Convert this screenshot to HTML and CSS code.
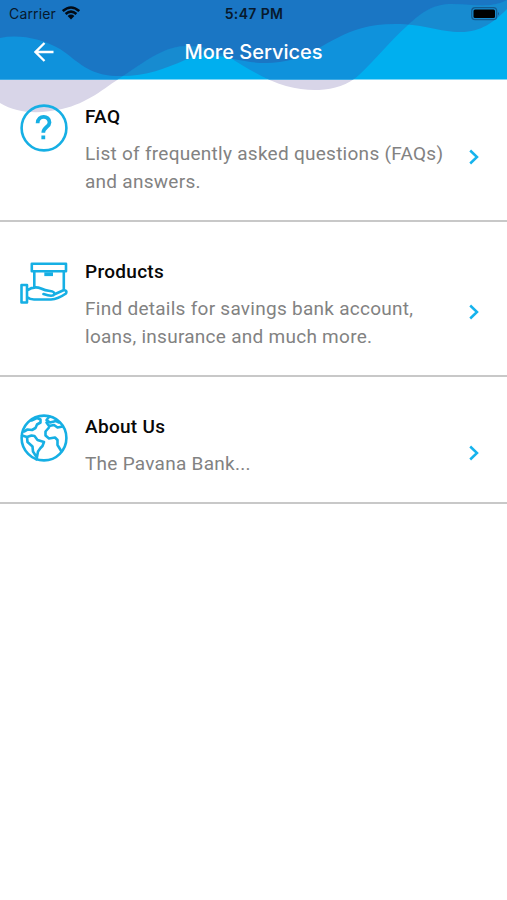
FILE: index.html
```html
<!DOCTYPE html>
<html lang="en">
<head>
<meta charset="utf-8">
<title>More Services</title>
<link rel="stylesheet" href="styles.css">
</head>
<body>
<svg class="waves" viewBox="0 0 507 120" aria-hidden="true">
  <defs>
    <clipPath id="bar"><rect width="507" height="79.5"/></clipPath>
    <path id="a" d="M0 0V103C18 114 40 114 62 109C88 103 103 89 123 76C150 58 166 46 187 46C218 46 232 60 254 72C278 86 301 91 319 90C334 89 348 85 359 75C376 59 390 41 407 26C424 10 435 4 452 4C474 4 490 9 507 0Z"/>
    <path id="b" d="M0 0V38C20 34 42 39 60 49C78 61 88 75 116 76C145 77 164 69 185 60C206 50 226 58 245 61C260 64 277 64 294 59C329 48 343 24 395 24C424 24 439 32 461 32C481 32 494 22 507 9V0Z"/>
    <clipPath id="inside-b"><use href="#b"/></clipPath>
  </defs>
  <use href="#a" class="haze"/>
  <g clip-path="url(#bar)">
    <rect class="bar-fill" width="507" height="80"/>
    <use href="#b" class="wave-b"/>
    <use href="#a" class="wave-a"/>
    <g clip-path="url(#inside-b)"><use href="#a" class="overlap"/></g>
  </g>
</svg>
<header class="header">
  <div class="status">
    <div class="carrier"><span>Carrier</span>
      <svg class="wifi" viewBox="0 0 18 14"><path d="M.8 5.1Q9-2.1 17.2 5.1M3.6 8Q9 3.4 14.4 8"/><path class="solid" d="M5.6 9.9Q9 7.2 12.4 9.9L9 13.4Z"/></svg>
    </div>
    <span class="time">5:47 PM</span>
    <svg class="battery" viewBox="0 0 29 14"><rect class="case" x=".7" y=".7" width="25" height="12" rx="3.5"/><rect x="2.5" y="2.5" width="21.5" height="8.5" rx="1.5"/><path class="tip" d="M27 5Q29 6.7 27 8.5Z"/></svg>
  </div>
  <div class="title-bar">
    <svg class="back" viewBox="0 0 20 20"><path d="M19.5 10H1.5M10.5 1L1.5 10L10.5 19"/></svg>
    <h1>More Services</h1>
  </div>
</header>
<main>
  <section class="row">
    <svg class="icon" viewBox="0 0 48 48"><circle cx="24" cy="24" r="22.4"/><path class="bold" d="M17.6 19.2C17.8 10.8 29.5 11 29.5 18.4C29.5 23 23.3 23.2 23.3 28.7M23.3 31.5V35.2"/></svg>
    <div class="copy"><h2>FAQ</h2><p>List of frequently asked questions (FAQs) and answers.</p></div>
    <svg class="chevron" viewBox="0 0 10 16"><path d="M1.2 1.5L8 8L1.2 14.5"/></svg>
  </section>
  <section class="row">
    <svg class="icon" viewBox="0 0 48 48"><path d="M11.8 4.8H46V12.2H11.8ZM14.3 12.2V28.5M43.8 12.2V31M1.5 26H7V43.5H1.5ZM7 31.5Q14 26.5 21 29.5Q25 31.7 30 32Q34.5 32.5 34.5 35Q33 38.5 23.5 35M34 35.5L43.5 31.3Q47.5 31 46 34.5Q38 40 31 40.5H14Q10 40.5 7 38"/><path class="bold" d="M24.3 15.2H33"/></svg>
    <div class="copy"><h2>Products</h2><p>Find details for savings bank account, loans, insurance and much more.</p></div>
    <svg class="chevron" viewBox="0 0 10 16"><path d="M1.2 1.5L8 8L1.2 14.5"/></svg>
  </section>
  <section class="row short">
    <svg class="icon" viewBox="0 0 48 48"><circle cx="24" cy="24" r="22.4"/><path d="M11.5 6.5L17 4L20.5 5.5L20.5 8.5L17 10.5L15.5 14L12 16L7.5 15.5L4 17.5M2 21.5L7 23L11.5 21.5L14.5 22L17.5 26L24 28L22.5 32L20.5 34L18 37.5L16.5 45.5M7 23L7.5 28L12.5 32.5L13 37.5L16.5 43M29.5 2.5L26.5 6L30 8.5L36 7L39 8.5M26.5 8.5L29 12L34 11L37.5 13.5L42.5 12.5M29 13.5L25.5 17.5V21.5L29 24.5L35 23.5L37.5 26L37.5 31L41.5 37.5"/></svg>
    <div class="copy"><h2>About Us</h2><p>The Pavana Bank...</p></div>
    <svg class="chevron" viewBox="0 0 10 16"><path d="M1.2 1.5L8 8L1.2 14.5"/></svg>
  </section>
</main>
</body>
</html>
```

FILE: styles.css
```css
* { box-sizing: border-box; }
body { margin: 0; background: #fff; font-family: Roboto, sans-serif; }
svg { display: block; flex: none; fill: none; }
.waves { position: absolute; top: 0; left: 0; width: 507px; height: 120px; z-index: -1; }
.haze { fill: #d8d5e8; }
.bar-fill { fill: #00afef; }
.wave-a { fill: #0f92dc; }
.wave-b { fill: #178bd0; }
.overlap { fill: #1a76c4; }
.header { height: 80px; }
.status { height: 27px; display: grid; grid-template-columns: 1fr auto 1fr; align-items: center; padding: 0 8px 0 9px; font: 14px/27px Inter, sans-serif; color: #07192d; }
.carrier { display: flex; align-items: center; gap: 6px; letter-spacing: .15px; }
.wifi { width: 18px; height: 14px; margin-top: -1px; stroke: #020b16; stroke-width: 2.6; }
.wifi .solid { fill: #020b16; stroke: none; }
.time { font-weight: 600; letter-spacing: .35px; }
.battery { width: 29px; height: 14px; margin-right: -1px; justify-self: end; fill: #000; }
.battery .case { fill: none; stroke: #145c91; stroke-width: 1.2; }
.battery .tip { fill: #145c91; }
.title-bar { height: 50px; display: grid; grid-template-columns: 34px 1fr 34px; align-items: center; }
.back { width: 20px; height: 20px; margin-left: 34px; stroke: #fff; stroke-width: 2.3; }
h1 { margin: 0; text-align: center; color: #fff; font: 500 20px/24px Inter, sans-serif; }
.row { height: 155px; display: flex; align-items: flex-start; padding: 37px 28px 0 20px; border-bottom: 2px solid #c8c8c8; }
.row:first-child { height: 142px; padding-top: 24px; }
.row.short { height: 127px; }
.icon { width: 48px; height: 48px; stroke: #16afe4; stroke-width: 2.6; stroke-linejoin: round; stroke-linecap: round; }
.icon .bold { stroke-width: 3.8; stroke-linecap: butt; }
.copy { flex: 1; margin-left: 17px; }
h2 { margin: 0; color: #080808; font: 500 19px/25px Roboto, sans-serif; letter-spacing: .3px; }
p { margin: 10.5px 0 0; width: 370px; color: #828282; font-size: 19px; line-height: 28.5px; letter-spacing: .27px; }
.chevron { width: 10px; height: 16px; margin-top: 44.5px; stroke: #16b3ed; stroke-width: 2.5; }
.short .chevron { margin-top: 30.5px; }
```
